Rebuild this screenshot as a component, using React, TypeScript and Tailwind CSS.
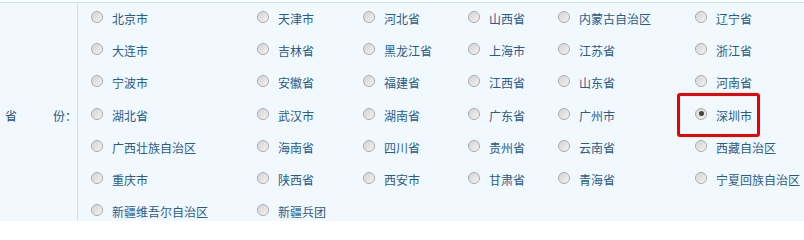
import React from "react";

const rows: string[][] = [
  ["北京市", "天津市", "河北省", "山西省", "内蒙古自治区", "辽宁省"],
  ["大连市", "吉林省", "黑龙江省", "上海市", "江苏省", "浙江省"],
  ["宁波市", "安徽省", "福建省", "江西省", "山东省", "河南省"],
  ["湖北省", "武汉市", "湖南省", "广东省", "广州市", "深圳市"],
  ["广西壮族自治区", "海南省", "四川省", "贵州省", "云南省", "西藏自治区"],
  ["重庆市", "陕西省", "西安市", "甘肃省", "青海省", "宁夏回族自治区"],
  ["新疆维吾尔自治区", "新疆兵团"],
];

function Radio({ checked }: { checked?: boolean }) {
  return (
    <span className="mb-[4px] flex h-[12px] w-[12px] shrink-0 items-center justify-center rounded-full border border-[#a8a8a8] bg-linear-to-br from-[#d2d2d2] to-[#f4f4f4] shadow-[inset_0_0_1px_#ffffff]">
      {checked && <span className="h-[5px] w-[5px] rounded-full bg-[#444444]" />}
    </span>
  );
}

export default function App() {
  return (
    <div
      className="h-[221px] w-[804px] overflow-hidden bg-white pt-[2px] text-[12px] text-[#2b5b88]"
      style={{ fontFamily: '"Noto Sans CJK SC", "Noto Sans", sans-serif' }}
    >
      <div className="flex border-t border-[#c9e2f0] bg-[#f2f9fe]">
        <div className="flex w-[78px] shrink-0 items-center justify-between border-r border-[#c9e2f0] pl-[5px] text-[#2a5680]">
          <span>省</span>
          <span>份：</span>
        </div>
        <div className="grid flex-1 auto-rows-[32.2px] grid-cols-[166px_106px_105px_90px_137px_1fr]">
          {rows.map((row, ri) =>
            row.map((name, ci) => {
              const checked = name === "深圳市";
              return (
                <div key={`${ri}-${ci}`} className="relative flex items-center pl-[13px]">
                  <Radio checked={checked} />
                  <span className="ml-[9px] whitespace-nowrap">{name}</span>
                  {checked && (
                    <span className="absolute left-[-5px] top-[-7px] h-[44px] w-[83px] rounded-[3px] border-[3px] border-[#ee0000]" />
                  )}
                </div>
              );
            })
          )}
        </div>
      </div>
    </div>
  );
}
